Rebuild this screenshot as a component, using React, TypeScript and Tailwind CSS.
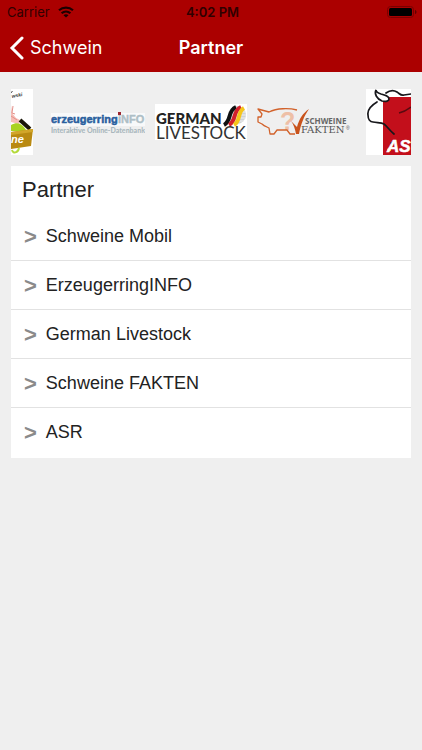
import type { ReactNode } from 'react'

const partners = ['Schweine Mobil', 'ErzeugerringINFO', 'German Livestock', 'Schweine FAKTEN', 'ASR']

function StatusBar() {
  return (
    <div className="flex h-6 items-center justify-between pl-[7px] pr-1 text-[13px] leading-4 text-[#300000]">
      <div className="flex flex-1 items-center gap-2">
        <span>Carrier</span>
        <svg className="h-3 w-4" viewBox="0 0 16 12" fill="none" stroke="#1c0000" strokeWidth="2.2">
          <path d="M1 4.3C5 .6 11 .6 15 4.3" />
          <path d="M3.6 7.2c2.6-2.3 6.2-2.3 8.8 0" />
          <path d="M8 11.6 5.5 9.2c1.5-1.3 3.5-1.3 5 0Z" fill="#1c0000" stroke="none" />
        </svg>
      </div>
      <span className="font-semibold">4:02 PM</span>
      <div className="flex flex-1 justify-end">
        <svg className="h-3 w-[31px]" viewBox="0 0 31 12" fill="none">
          <rect x=".5" y=".5" width="26" height="11" rx="3" stroke="#7a0000" />
          <rect x="2" y="2" width="23" height="8" rx="1.5" fill="#000" />
          <path d="M28 4c2 .6 2 3.400 0 4Z" fill="#600000" />
        </svg>
      </div>
    </div>
  )
}

function MobilLogo() {
  return (
    <svg className="h-[66px] w-[22px]" viewBox="0 0 22 66">
      <rect width="22" height="66" fill="#fff" />
      <text x="1" y="9" fontSize="5" fontStyle="italic" fontWeight="700" fill="#333" transform="rotate(-10 1 9)">
        wski
      </text>
      <path d="M0 3.500 1.500 2.500" stroke="#222" />
      <path d="m0 16 1 8 4 5 4 2-1 4-8-2Z" fill="#f6bdb5" />
      <path d="m2 17-1 7 3 1m-4 2 6 4" fill="none" stroke="#e3908a" />
      <path d="M0 36c5-3 9-2 12 1l4 5H0Z" fill="#a9d21f" />
      <path d="M9 31 19 40" stroke="#1a1608" strokeWidth="4" />
      <path d="m0 43 22-3-2 17-20 3Z" fill="#b98a12" />
      <path d="m0 43 22-3v3L0 46Z" fill="#d2a62a" />
      <path d="M1 61c1 4 6 3 7-2" fill="none" stroke="#b4da3b" strokeWidth="2" />
      <text x="0" y="54" fontSize="11" fontStyle="italic" fontWeight="700" fill="#fff">
        ne
      </text>
    </svg>
  )
}

function ErzeugerringLogo() {
  return (
    <svg className="h-7 w-[94px]" viewBox="0 0 94 28">
      <rect width="94" height="13" y="5" fill="#f8f9fa" />
      <text x="0" y="15" fontSize="11" fontWeight="700" fill="#2a5f9e" stroke="#2a5f9e" strokeWidth=".5">
        erzeugerring
      </text>
      <text x="67" y="15" fontSize="11" fontWeight="700" fill="#aebfc6" stroke="#aebfc6" strokeWidth=".4">
        iNFO
      </text>
      <rect x="67" y="4" width="3" height="3" fill="#9c2630" />
      <text x="0" y="25" fontSize="7" fontWeight="900" fill="#a9b7bd" fontFamily="Lato, sans-serif">
        Interaktive Online-Datenbank
      </text>
    </svg>
  )
}

function GermanLivestockLogo() {
  return (
    <svg className="h-9 w-[92px] font-['Lato',sans-serif]" viewBox="0 0 92 36">
      <rect width="92" height="36" fill="#fff" />
      <circle cx="82" cy="11" r="9" fill="#cfd2d5" />
      <path d="M73 8h18M73 11h18M73 14h18M75 17h14M75 5h14" stroke="#f1f1f1" />
      <g fill="none" strokeWidth="4">
        <path d="M69 21C77 17 72 7 81 3" stroke="#111" />
        <path d="M74 21C82 17 77 7 86 3" stroke="#d31f2b" />
        <path d="M79 21C86 17 82 8 89 4" stroke="#f5c51c" />
      </g>
      <text x="1" y="20" fontSize="15" fontWeight="900" fill="#222">
        GERMAN
      </text>
      <text x="1" y="35" fontSize="17" fill="#333">
        LIVESTOCK
      </text>
    </svg>
  )
}

function FaktenLogo() {
  return (
    <svg className="h-7 w-[94px]" viewBox="0 0 94 28">
      <text x="23" y="22" fontSize="25" fontWeight="700" fill="#eebfa6" fontFamily="Liberation Sans, sans-serif">
        ?
      </text>
      <path
        d="M40 2C32 0 20 0 12 4L1 1l4 5-1 3H1v5l4 2c2 2 5 3 7 4l1 6h4l3-4h10l3 4h5"
        fill="none"
        stroke="#d2622b"
        strokeWidth="1.300"
        strokeLinejoin="round"
      />
      <path d="m34 13 6 6C42 11 46 5 52 1c-5 7-8 15-10 25h-3c-1-5-2-9-5-13Z" fill="#c9531c" />
      <text x="48" y="16" fontSize="8" fontWeight="700" fill="#666" fontFamily="Open Sans, sans-serif">
        SCHWEINE
      </text>
      <text x="44" y="25" fontSize="10" fill="#555" fontFamily="DejaVu Serif, serif">
        FAKTEN
      </text>
      <text x="89" y="22" fontSize="5" fill="#555">
        ®
      </text>
    </svg>
  )
}

function AsrLogo() {
  return (
    <svg className="h-[66px] w-[45px]" viewBox="0 0 45 66">
      <rect width="45" height="66" fill="#fff" />
      <path d="M17 8h28v58H17Z" fill="#c30f1b" />
      <g fill="none" stroke="#17171b" strokeWidth="1.700" strokeLinecap="round">
        <path d="M10 1C8 5 11 10 16 12c4 1 7 0 7-2 0-3-4-4-8-5-3-1-5-2-5-4Z" fill="#fff" />
        <path d="M11 13C6 16 1 20 2 26c0 4 2 7 5 7 4 1 8 0 11 2s6 7 10 10" />
        <path d="M20 4c4-3 8-3 11-1s4 4 7 3l7-1" />
      </g>
      <path d="M33 24c4-1 8-3 12-6" fill="none" stroke="#5a0a10" strokeWidth="1.500" />
      <path d="m21 60 4-3v5h-4Z" fill="#f2b71c" />
      <path d="m24 54 3-2-1 4Z" fill="#17171b" />
      <text x="21" y="63" fontSize="17" fontStyle="italic" fontWeight="700" fill="#fff" stroke="#fff" strokeWidth=".5">
        AS
      </text>
    </svg>
  )
}

function LogoLink({ label, children }: { label: string; children: ReactNode }) {
  return (
    <a href="#" aria-label={label} className="shrink-0">
      {children}
    </a>
  )
}

export default function App() {
  return (
    <div className="min-h-screen bg-[#efefef] font-['Liberation_Sans',Arial,sans-serif] text-[#222]">
      <header className="bg-[#ab0000] font-['Inter',sans-serif]">
        <StatusBar />
        <div className="flex h-12 items-center px-2">
          <div className="flex-1">
            <button type="button" className="flex items-center gap-1.5 text-lg text-white">
              <svg className="h-6 w-4" viewBox="0 0 16 24" fill="none" stroke="currentColor" strokeWidth="3">
                <path d="M14 2 4 12l10 10" strokeLinecap="round" />
              </svg>
              Schwein
            </button>
          </div>
          <h1 className="text-lg font-semibold text-white">Partner</h1>
          <div className="flex-1" />
        </div>
      </header>

      <main className="px-[11px] pt-[17px]">
        <div className="flex h-[66px] items-center justify-between overflow-hidden">
          <LogoLink label="Schweine Mobil">
            <MobilLogo />
          </LogoLink>
          <div className="flex items-center gap-2.5 pl-0.5">
            <LogoLink label="ErzeugerringINFO">
              <ErzeugerringLogo />
            </LogoLink>
            <LogoLink label="German Livestock">
              <GermanLivestockLogo />
            </LogoLink>
            <LogoLink label="Schweine FAKTEN">
              <FaktenLogo />
            </LogoLink>
          </div>
          <LogoLink label="ASR">
            <AsrLogo />
          </LogoLink>
        </div>

        <section className="mt-[11px] bg-white pb-0.5">
          <h2 className="px-[11px] pt-2 text-[22px] leading-8">Partner</h2>
          <ul className="pt-1.5">
            {partners.map((name) => (
              <li key={name} className="border-b border-[#e2e2e2] last:border-b-0">
                <a href="#" className="flex h-12 items-center gap-[9px] px-[13px] text-lg">
                  <span className="pt-0.5 text-[22px] leading-6 font-bold text-[#8a8a8a]">&gt;</span>
                  {name}
                </a>
              </li>
            ))}
          </ul>
        </section>
      </main>
    </div>
  )
}
